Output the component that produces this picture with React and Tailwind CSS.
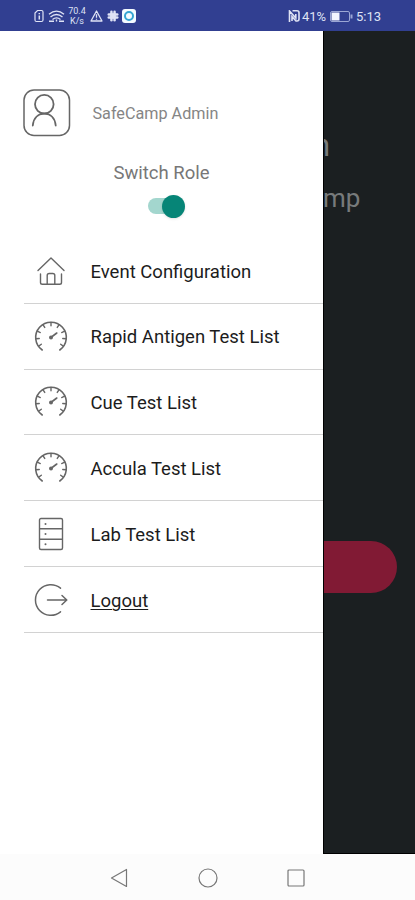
const HomeIcon = () => (
  <svg viewBox="0 0 34 34" className="h-[34px] w-[34px]" fill="none" stroke="#666" strokeWidth="1.4" strokeLinecap="round" strokeLinejoin="round">
    <path d="M4 16.500 17 4l13 12.500" />
    <path d="M6.500 20v8.500q0 1.800 1.800 1.800h17.400q1.800 0 1.800-1.800V20" />
    <path d="M13.200 30V21.500q0-2 2-2h3.600q2 0 2 2V30" />
  </svg>
);

const TICKS = [-125, -95, -65, -32, 0, 32, 65, 95, 125];

const GaugeIcon = () => (
  <svg viewBox="0 0 34 34" className="h-[34px] w-[34px]" fill="none" stroke="#666" strokeWidth="1.6" strokeLinecap="round">
    <path d="M8.200 30A15.300 15.300 0 1 1 25.800 30" />
    {TICKS.map((angle) => (
      <path key={angle} d="M17 2.500v3.200" strokeWidth="1.400" transform={`rotate(${angle} 17 17.500)`} />
    ))}
    <circle cx="17" cy="17.500" r="2" fill="#666" stroke="none" />
    <path d="m17.500 17 5.300-4" />
  </svg>
);

const ServerIcon = () => (
  <svg viewBox="0 0 34 34" className="h-[34px] w-[34px]" fill="none" stroke="#666" strokeWidth="1.4">
    <rect x="5.500" y="1.500" width="23" height="31" rx="1.500" />
    <path d="M5.500 11.800h23M5.500 22.200h23" />
    <g fill="#666" stroke="none">
      <circle cx="11.500" cy="7" r="1" />
      <circle cx="11.500" cy="17" r="1" />
      <circle cx="11.500" cy="27.300" r="1" />
    </g>
  </svg>
);

const LogoutIcon = () => (
  <svg viewBox="0 0 34 34" className="h-[34px] w-[34px]" fill="none" stroke="#666" strokeWidth="1.5" strokeLinecap="round" strokeLinejoin="round">
    <path d="M26.500 5.200A15.300 15.300 0 1 0 26.500 28.800" />
    <path d="M13.500 17h19M28 12.500l4.800 4.500-4.800 4.500" />
  </svg>
);

const menuItems = [
  { label: 'Event Configuration', icon: HomeIcon },
  { label: 'Rapid Antigen Test List', icon: GaugeIcon },
  { label: 'Cue Test List', icon: GaugeIcon },
  { label: 'Accula Test List', icon: GaugeIcon },
  { label: 'Lab Test List', icon: ServerIcon },
  { label: 'Logout', icon: LogoutIcon, underline: true },
];

const StatusBar = () => (
  <header className="flex h-[31px] shrink-0 items-center justify-between bg-[#313f91] pl-[34px] pr-[34px] pt-px text-[#dfe3f5]">
    <div className="flex items-center">
      {/* SIM */}
      <svg viewBox="0 0 10 14" className="h-[14px] w-[10px]" fill="none" stroke="currentColor" strokeWidth="1.200">
        <path d="M3.500 1.500h4q1.500 0 1.500 1.500v8q0 1.500-1.500 1.500h-5Q1 12.500 1 11V4z" />
        <path d="M5.300 4v1.300M5.300 6.500v4" strokeWidth="1.500" />
      </svg>
      {/* Wi-Fi */}
      <svg viewBox="0 0 17 14" className="ml-1 h-[14px] w-[17px]" fill="none" stroke="currentColor" strokeWidth="1.400">
        <path d="M1 5.200Q8.500-1 16 5.200M2.500 8q6-5 12 0M4.500 10.500q4-3.200 8 0" />
        <path d="M1 12.300h5M11 12.300h5M8.500 10.500v2" />
      </svg>
      <div className="ml-[3px] flex w-[18px] flex-col items-center text-[9px] leading-[10px]">
        <span>70.4</span>
        <span>K/s</span>
      </div>
      {/* Warning */}
      <svg viewBox="0 0 13 12" className="ml-1 h-3 w-[13px]" fill="none" stroke="currentColor" strokeWidth="1.300" strokeLinejoin="round">
        <path d="M6.500 1 12 11H1zM6.500 4.300v3.500M6.500 8.800v1" />
      </svg>
      {/* Four-lobed badge */}
      <svg viewBox="0 0 12 12" className="ml-1 h-3 w-3" fill="currentColor">
        <rect x="3.200" y=".5" width="2.500" height="11" rx="1.250" />
        <rect x="6.300" y=".5" width="2.500" height="11" rx="1.250" />
        <rect x=".5" y="3.200" width="11" height="2.500" rx="1.250" />
        <rect x=".5" y="6.300" width="11" height="2.500" rx="1.250" />
        <rect x="3.500" y="3.500" width="5" height="5" />
      </svg>
      <svg viewBox="0 0 14 14" className="ml-[3px] h-[14px] w-[14px]">
        <rect width="14" height="14" rx="3" fill="#f4fbff" />
        <circle cx="7" cy="7" r="4" fill="none" stroke="#35a5d2" strokeWidth="2" />
      </svg>
    </div>
    <div className="flex items-center">
      {/* NFC */}
      <svg viewBox="0 0 12 12" className="h-3 w-3" fill="none" stroke="currentColor" strokeWidth="1.600">
        <path d="M1.500 12V1l6.300 7V4M4.500.8H9q2 0 2 2V9q0 2-2 2H8L4 6.500V11" />
      </svg>
      <span className="ml-[2px] w-[25px] text-[13px] leading-none">41%</span>
      <svg viewBox="0 0 23 11" className="ml-[3px] h-[11px] w-[23px]" fill="none" stroke="#9ba6d4">
        <rect x=".5" y=".5" width="19" height="10" rx="1.500" />
        <rect x="1.500" y="1.500" width="8" height="8" fill="#f3f5ff" stroke="none" />
        <path d="M21.500 3.500v4" strokeWidth="2" />
      </svg>
      <span className="ml-[3px] w-[25px] text-[13px] leading-none">5:13</span>
    </div>
  </header>
);

const Drawer = () => (
  <aside className="flex w-[323px] shrink-0 flex-col bg-white">
    <div className="flex items-center gap-[21.500px] pl-[23px] pt-[58px]">
      <svg viewBox="0 0 48 48" className="h-12 w-12" fill="none" stroke="#666" strokeWidth="1.500" strokeLinecap="round">
        <rect x="1" y="1" width="45.500" height="45.500" rx="10" />
        <circle cx="21.300" cy="15.200" r="9.300" strokeWidth="1.800" />
        <path d="M9.800 36.500C10.500 29 15 24.700 21.300 24.700S32 29 32.700 36.500" strokeWidth="1.800" />
      </svg>
      <span className="pt-[2px] text-[16.200px] leading-5 text-[#858585]">SafeCamp Admin</span>
    </div>

    {/* Role toggle */}
    <div className="flex flex-col items-center pt-6">
      <span className="text-[18.500px] leading-6 text-[#777]">Switch Role</span>
      <button className="ml-[10px] mt-[9px] flex h-6 w-[37px] items-center rounded-full" role="switch" aria-checked="true">
        <span className="h-4 w-[20px] rounded-l-full bg-[#a3d6ce]" />
        <span className="-ml-[6px] h-[23px] w-[23px] rounded-full bg-[#068577] shadow-sm" />
      </button>
    </div>

    <nav className="ml-6 mt-5 flex flex-col">
      {menuItems.map(({ label, icon: Icon, underline }) => (
        <a key={label} className="flex h-[65.800px] items-center border-b border-[#d2d2d2] pl-[10px] pt-px">
          <Icon />
          <span className={`ml-[22.500px] pt-[3px] text-[18.500px] text-[#1c1c1c] ${underline ? 'underline decoration-1 underline-offset-2' : ''}`}>
            {label}
          </span>
        </a>
      ))}
    </nav>
  </aside>
);

const HomeScreen = () => (
  <main className="flex min-w-0 flex-1 flex-col border-b border-l border-black bg-[#1b1f21] text-[#777a7b]">
    <div className="mt-[95px] flex h-10 justify-end overflow-hidden pr-[85px]">
      <span className="text-[31px] leading-10">n</span>
    </div>
    <span className="-ml-px mt-[14px] text-[26px] leading-9">mp</span>
    <div className="mt-[325px] h-[52px] w-[73px] rounded-r-full bg-[#811a34]" />
  </main>
);

const NavigationBar = () => (
  <footer className="flex h-[46px] shrink-0 items-center bg-[#fcfcfc] pl-[110px] pt-px text-[#777]">
    <svg viewBox="0 0 18 20" className="h-5 w-[18px]" fill="none" stroke="currentColor" strokeWidth="1.200" strokeLinejoin="round">
      <path d="M16.500 1.500v17L1.500 10z" />
    </svg>
    <svg viewBox="0 0 20 20" className="ml-[70px] h-5 w-5" fill="none" stroke="currentColor" strokeWidth="1.200">
      <circle cx="10" cy="10" r="9" />
    </svg>
    <svg viewBox="0 0 18 18" className="ml-[69px] h-[18px] w-[18px]" fill="none" stroke="currentColor" strokeWidth="1.200">
      <rect x="1" y="1" width="16" height="16" rx="1" />
    </svg>
  </footer>
);

const App = () => {
  return (
    <div className="flex h-[900px] w-[415px] flex-col overflow-hidden bg-[#fcfcfc] font-['Roboto',sans-serif]">
      <StatusBar />
      <div className="flex h-[823px] shrink-0">
        <Drawer />
        <HomeScreen />
      </div>
      <NavigationBar />
    </div>
  );
};

export default App;
